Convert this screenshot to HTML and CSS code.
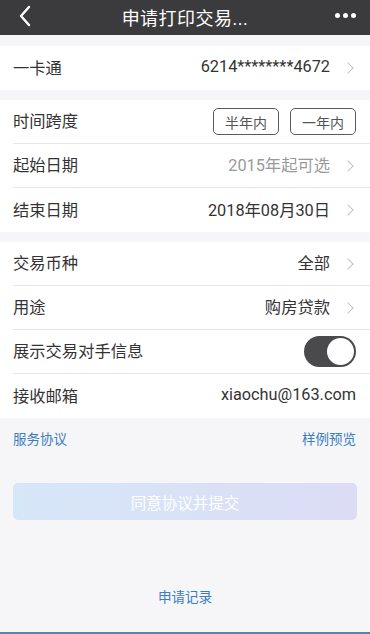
FILE: index.html
```html
<!DOCTYPE html>
<html lang="zh-CN">
<head>
    <meta charset="UTF-8">
    <meta name="viewport" content="width=device-width, initial-scale=1.0">
    <title>申请打印交易流水</title>
    <link rel="stylesheet" href="styles.css">
</head>
<body>
    <!-- Top bar -->
    <div class="topbar">
        <span class="back">
            <svg width="14" height="22" viewBox="0 0 14 22"><path d="M11 2 L3 11 L11 20" fill="none" stroke="#fff" stroke-width="2.4" stroke-linecap="round" stroke-linejoin="round"/></svg>
        </span>
        <div class="title">申请打印交易...</div>
        <span class="more"><i></i><i></i><i></i></span>
    </div>

    <div class="group">
        <div class="row">
            <span class="label">一卡通</span>
            <span class="value">6214********4672</span>
            <span class="arrow"></span>
        </div>
    </div>

    <div class="group">
        <div class="row">
            <span class="label">时间跨度</span>
            <div class="spans">
                <span class="span-btn">半年内</span>
                <span class="span-btn">一年内</span>
            </div>
        </div>
        <div class="row">
            <span class="label">起始日期</span>
            <span class="value muted">2015年起可选</span>
            <span class="arrow"></span>
        </div>
        <div class="row">
            <span class="label">结束日期</span>
            <span class="value">2018年08月30日</span>
            <span class="arrow"></span>
        </div>
    </div>

    <div class="group">
        <div class="row">
            <span class="label">交易币种</span>
            <span class="value">全部</span>
            <span class="arrow"></span>
        </div>
        <div class="row">
            <span class="label">用途</span>
            <span class="value">购房贷款</span>
            <span class="arrow"></span>
        </div>
        <div class="row">
            <span class="label">展示交易对手信息</span>
            <span class="toggle"><span class="knob"></span></span>
        </div>
        <div class="row">
            <span class="label">接收邮箱</span>
            <span class="value">xiaochu@163.com</span>
        </div>
    </div>

    <div class="links">
        <a href="#" class="link">服务协议</a>
        <a href="#" class="link">样例预览</a>
    </div>

    <div class="submit-wrap">
        <button class="submit" disabled>同意协议并提交</button>
    </div>

    <div class="records">
        <a href="#" class="link">申请记录</a>
    </div>
    <div class="bottom-line"></div>
</body>
</html>
```

FILE: styles.css
```css
body {
    margin: 0;
    background-color: #f6f5f8;
    font-family: Roboto, "Noto Sans CJK SC", sans-serif;
    color: #333;
    height: 634px;
    overflow: hidden;
    position: relative;
}
.topbar {
    height: 35px;
    background-color: #3b3a3c;
    display: flex;
    align-items: center;
    justify-content: center;
    position: relative;
    margin-bottom: 11px;
}
.title {
    color: #fff;
    font-size: 18px;
    letter-spacing: 0.5px;
    margin-bottom: 2px;
}
.back {
    position: absolute;
    left: 18px;
    top: 5px;
}
.more {
    position: absolute;
    right: 14px;
    top: 13px;
    display: flex;
    gap: 3px;
}
.more i {
    width: 5px;
    height: 5px;
    border-radius: 50%;
    background-color: #fff;
}
.group {
    background-color: #fff;
    padding-left: 13px;
    margin-bottom: 10px;
}
.row {
    height: 44px;
    display: flex;
    align-items: center;
    padding-right: 14px;
    padding-bottom: 3px;
    border-bottom: 1px solid #e6e6e9;
    box-sizing: border-box;
}
.row:last-child {
    border-bottom: none;
}
.label {
    flex: 1;
    font-size: 16.3px;
    color: #333;
}
.value {
    font-size: 16.3px;
    color: #333;
}
.value.muted {
    color: #999;
}
.arrow {
    width: 7px;
    height: 7px;
    border-top: 1.5px solid #c4c4c8;
    border-right: 1.5px solid #c4c4c8;
    transform: rotate(45deg);
    margin-left: 14px;
    margin-right: 4px;
    margin-top: 3px;
}
.spans {
    display: flex;
    gap: 11px;
    margin-top: 3px;
}
.span-btn {
    width: 66px;
    height: 27px;
    box-sizing: border-box;
    border: 1px solid #5a5a5a;
    border-radius: 5px;
    font-size: 14px;
    color: #555;
    display: flex;
    align-items: center;
    justify-content: center;
}
.toggle {
    width: 52px;
    height: 31px;
    border-radius: 16px;
    background-color: #4a4a4c;
    position: relative;
    margin-top: 3px;
}
.knob {
    position: absolute;
    right: 2px;
    top: 2px;
    width: 27px;
    height: 27px;
    border-radius: 50%;
    background-color: #fff;
}
.links {
    display: flex;
    justify-content: space-between;
    padding: 0 14px 0 13px;
}
.link {
    color: #3a7fc0;
    font-size: 13.5px;
    text-decoration: none;
}
.submit-wrap {
    padding: 35px 13px 0 13px;
}
.submit {
    width: 100%;
    height: 37px;
    border: none;
    border-radius: 5px;
    background: linear-gradient(90deg, #d6e7f8, #dcdcf5);
    color: #fff;
    font-size: 15.5px;
    font-family: "Noto Sans CJK SC", sans-serif;
}
.records {
    text-align: center;
    margin-top: 66px;
}
.bottom-line {
    position: absolute;
    left: 0;
    right: 0;
    bottom: 0;
    height: 2px;
    background-color: #4a8aae;
}
```
